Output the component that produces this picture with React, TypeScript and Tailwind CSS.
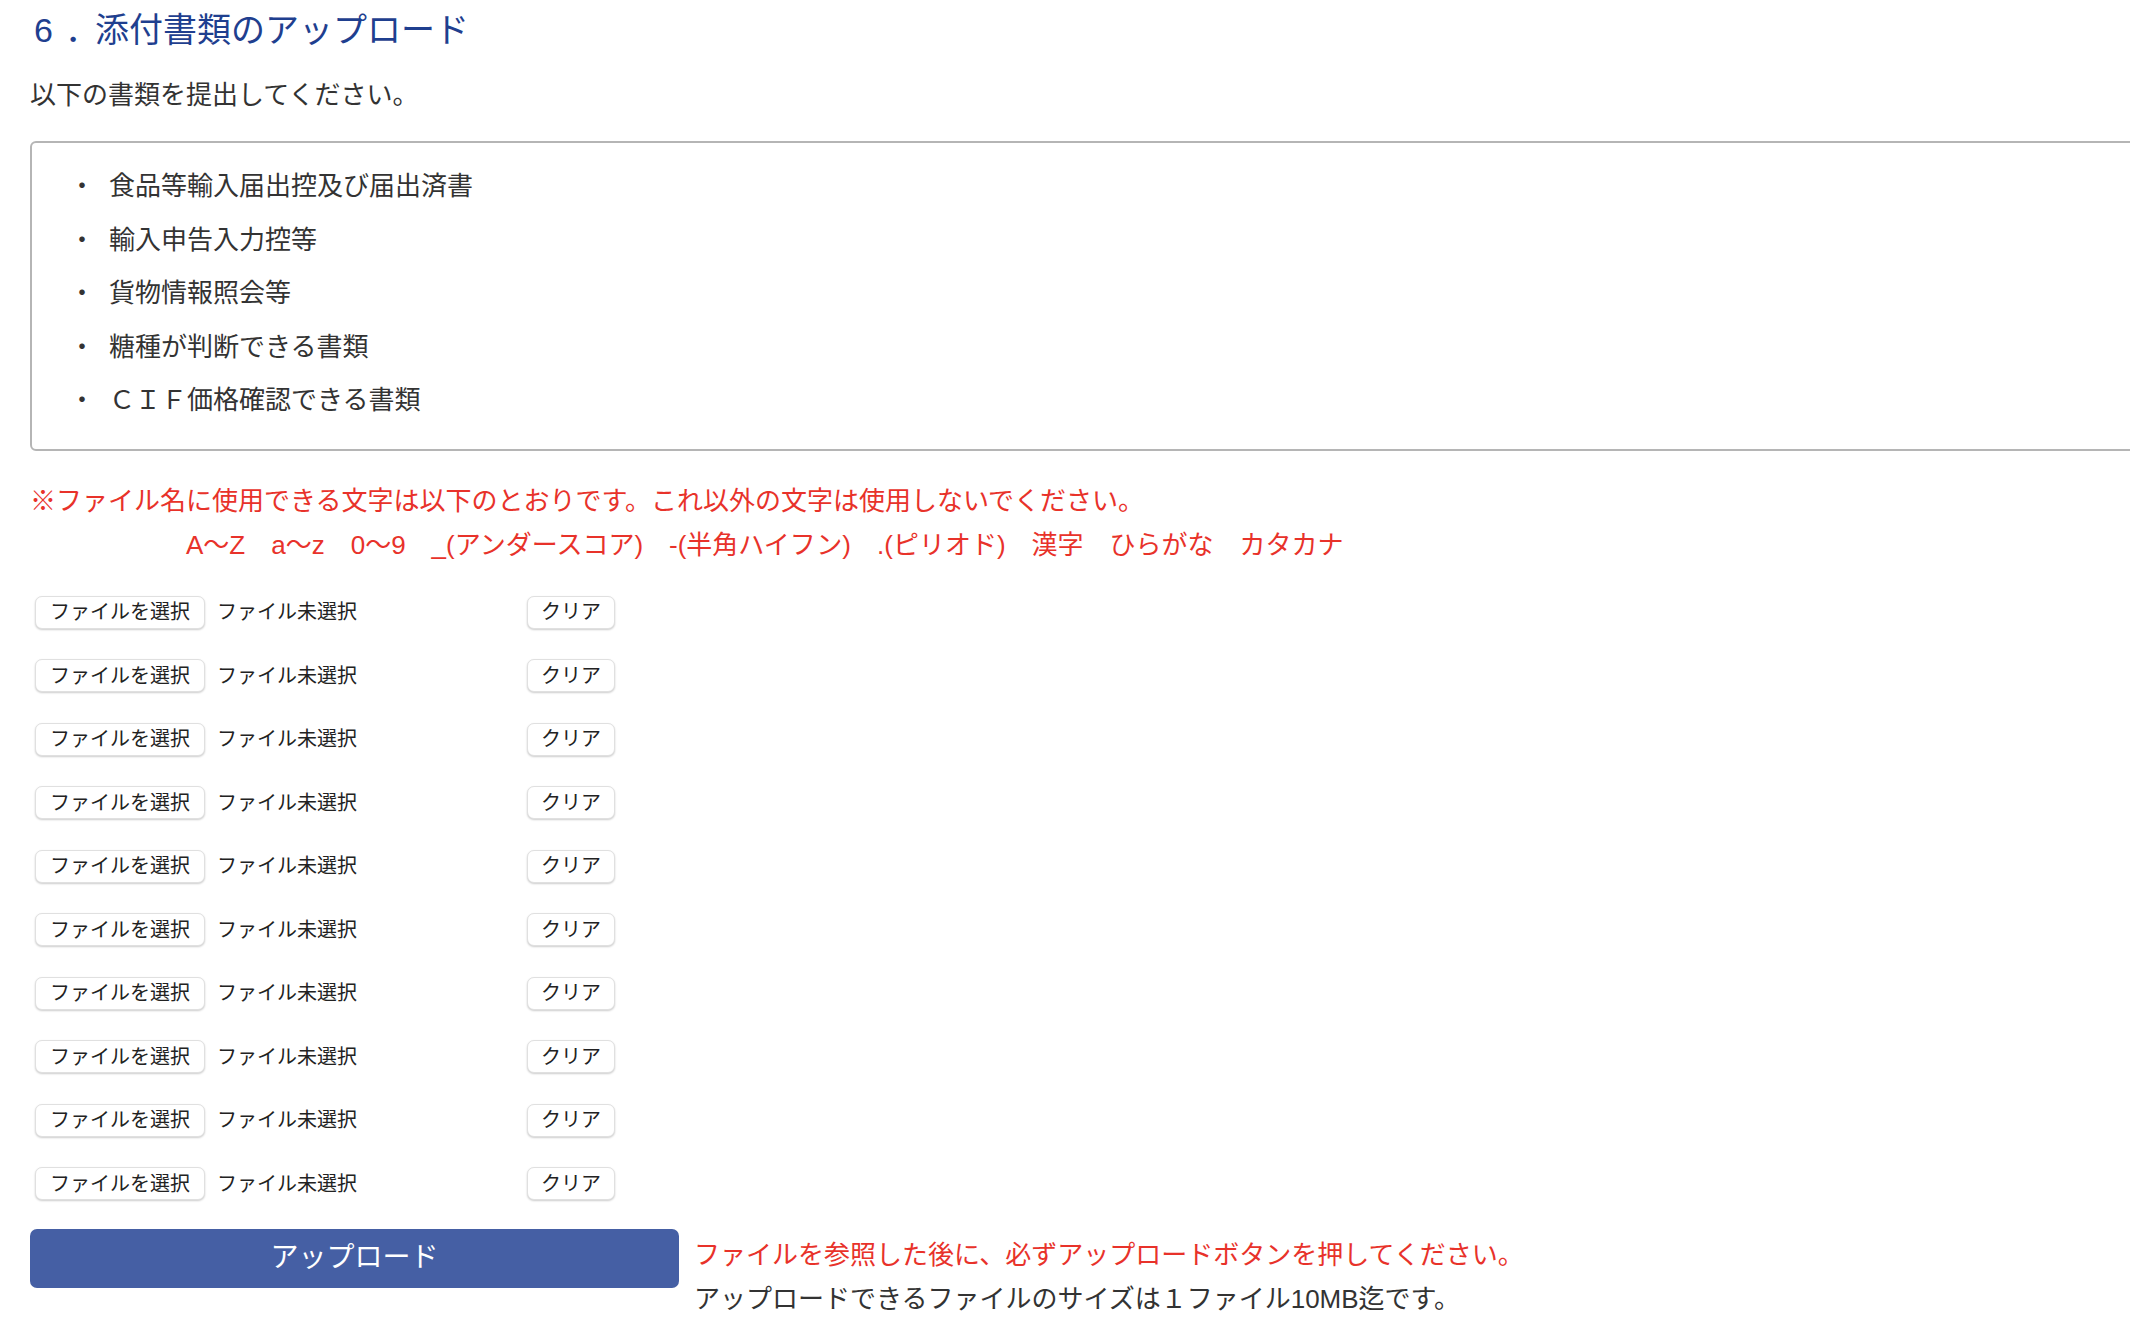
const docs = [
  "食品等輸入届出控及び届出済書",
  "輸入申告入力控等",
  "貨物情報照会等",
  "糖種が判断できる書類",
  "ＣＩＦ価格確認できる書類",
];

function FileRow() {
  return (
    <div className="flex h-[63.5px] items-center">
      <button
        type="button"
        className="ml-[5px] flex h-[33px] w-[170px] items-center justify-center rounded-[7px] border border-[#e0e0e0] bg-white text-[20px] leading-none text-[#222] shadow-[0_1px_2px_rgba(0,0,0,0.2)]"
      >
        ファイルを選択
      </button>
      <span className="ml-[12px] w-[310px] text-[20px] leading-none text-[#222]">ファイル未選択</span>
      <button
        type="button"
        className="flex h-[33px] w-[88px] items-center justify-center rounded-[7px] border border-[#e0e0e0] bg-white text-[20px] leading-none text-[#222] shadow-[0_1px_2px_rgba(0,0,0,0.2)]"
      >
        クリア
      </button>
    </div>
  );
}

export default function App() {
  return (
    <div className="min-h-screen overflow-hidden bg-white pl-[30px] font-['Liberation_Sans','Noto_Sans_CJK_JP',sans-serif] text-[#333]">
      <h2 className="pl-[4px] pt-[10px] text-[34px] leading-[40px] text-[#1f3f8f]">
        <span>6</span>
        <span className="ml-[12px] mr-[-4px]">．</span>
        添付書類のアップロード
      </h2>
      <p className="mt-[27px] text-[26px] leading-[36px]">以下の書類を提出してください。</p>

      <div className="mr-[-20px] mt-[28px] rounded-[6px] border-2 border-[#b5b5b5] pb-[21px] pt-[17px]">
        {docs.map((d) => (
          <div key={d} className="flex h-[53.5px] items-center text-[26px]">
            <span className="ml-[37px] w-[40px]">・</span>
            <span>{d}</span>
          </div>
        ))}
      </div>

      <p className="mt-[28px] text-[26px] leading-[44px] text-[#e8322a]">
        ※ファイル名に使用できる文字は以下のとおりです。これ以外の文字は使用しないでください。
      </p>
      <p className="pl-[156px] text-[26px] leading-[44px] text-[#e8322a]">
        A〜Z　a〜z　0〜9　_(アンダースコア)　-(半角ハイフン)　.(ピリオド)　漢字　ひらがな　カタカナ
      </p>

      <div className="mt-[14px]">
        {Array.from({ length: 10 }).map((_, i) => (
          <FileRow key={i} />
        ))}
      </div>

      <div className="mt-[13px] flex items-start">
        <button
          type="button"
          className="h-[59px] w-[649px] rounded-[7px] bg-[#455fa4] text-[28px] text-white"
        >
          アップロード
        </button>
        <div className="ml-[15px] mt-[4px] text-[26px] leading-[44px]">
          <p className="text-[#e8322a]">ファイルを参照した後に、必ずアップロードボタンを押してください。</p>
          <p className="text-[#333]">アップロードできるファイルのサイズは１ファイル10MB迄です。</p>
        </div>
      </div>
    </div>
  );
}
